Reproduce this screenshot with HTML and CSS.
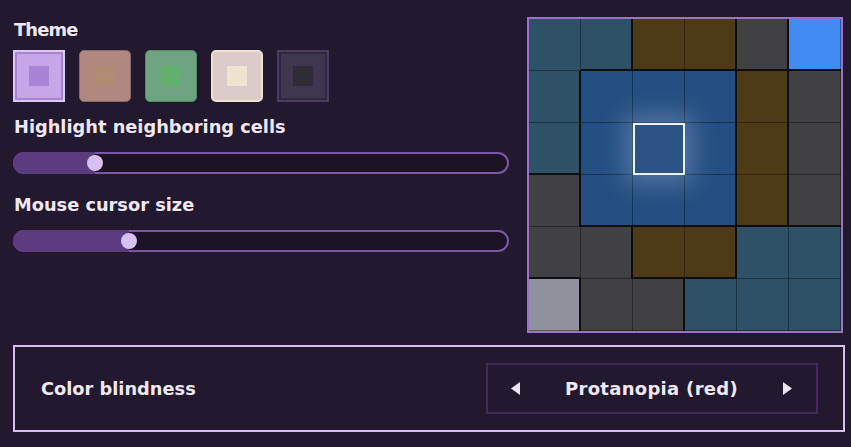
FILE: index.html
```html
<!DOCTYPE html>
<html lang="en">
<head>
<meta charset="utf-8">
<title>Settings</title>
<link rel="stylesheet" href="styles.css">
</head>
<body>
<div class="page">
  <div class="top">
    <div class="controls">
      <div class="label label-theme">Theme</div>
      <div class="swatches">
        <div class="sw sw-purple"><span class="sw-dot"></span></div>
        <div class="sw sw-rose"><span class="sw-dot"></span></div>
        <div class="sw sw-green"><span class="sw-dot"></span></div>
        <div class="sw sw-cream"><span class="sw-dot"></span></div>
        <div class="sw sw-dark"><span class="sw-dot"></span></div>
      </div>
      <div class="label">Highlight neighboring cells</div>
      <div class="slider">
        <div class="fill" style="width:82px"></div>
        <div class="knob" style="left:80px"></div>
      </div>
      <div class="label">Mouse cursor size</div>
      <div class="slider">
        <div class="fill" style="width:116px"></div>
        <div class="knob" style="left:114px"></div>
      </div>
    </div>
    <div class="board">
      <div class="c teal"></div><div class="c teal R B"></div><div class="c brown B"></div><div class="c brown R B"></div><div class="c gray R B"></div><div class="c bright B"></div>
      <div class="c teal R"></div><div class="c blue"></div><div class="c blue"></div><div class="c blue R"></div><div class="c brown R"></div><div class="c gray"></div>
      <div class="c teal R B"></div><div class="c blue"></div><div class="c sel"></div><div class="c blue R"></div><div class="c brown R"></div><div class="c gray"></div>
      <div class="c gray R"></div><div class="c blue B"></div><div class="c blue B"></div><div class="c blue R B"></div><div class="c brown R B"></div><div class="c gray B"></div>
      <div class="c gray B"></div><div class="c gray R"></div><div class="c brown B"></div><div class="c brown R B"></div><div class="c teal"></div><div class="c teal"></div>
      <div class="c light R"></div><div class="c gray"></div><div class="c gray R"></div><div class="c teal"></div><div class="c teal"></div><div class="c teal"></div>
    </div>
  </div>
  <div class="panel">
    <div class="panel-label">Color blindness</div>
    <div class="selector">
      <svg class="arrow" width="9" height="13" viewBox="0 0 9 13"><polygon points="9,0 9,13 0,6.5" /></svg>
      <span class="selector-value">Protanopia (red)</span>
      <svg class="arrow" width="9" height="13" viewBox="0 0 9 13"><polygon points="0,0 0,13 9,6.5" /></svg>
    </div>
  </div>
</div>
</body>
</html>
```
FILE: styles.css
```css
* { box-sizing: border-box; }
html, body { margin: 0; padding: 0; }
body {
  background: #22192e;
  color: #efe7f5;
  font-family: "DejaVu Sans", "Noto Sans", sans-serif;
  font-weight: 700;
  width: 851px;
  height: 447px;
  overflow: hidden;
}
.page {
  padding: 17px 0 0 13px;
}
.top {
  display: flex;
  gap: 18px;
}
.controls {
  width: 496px;
  display: flex;
  flex-direction: column;
}
.label {
  font-size: 17.8px;
  line-height: 26px;
  padding-left: 1px;
  margin-bottom: 12px;
}
.label-theme {
  margin-bottom: 7px;
  letter-spacing: -0.8px;
}
.swatches {
  display: flex;
  gap: 14px;
  margin-bottom: 12px;
}
.sw {
  width: 52px;
  height: 52px;
  display: flex;
  align-items: center;
  justify-content: center;
}
.sw-dot {
  width: 20px;
  height: 20px;
  display: block;
}
.sw-purple {
  background: #c6a6e6;
  border: 2px solid #dcc8f4;
  box-shadow: inset 0 0 0 2px #a982d6;
}
.sw-purple .sw-dot { background: #ab83d4; }
.sw-rose {
  background: #b0887f;
  border: 1px solid #8a6676;
  border-radius: 5px;
}
.sw-rose .sw-dot { background: #b28b74; }
.sw-green {
  background: #6fa482;
  border: 1px solid #4f8e62;
  border-radius: 5px;
}
.sw-green .sw-dot { background: #63b06e; }
.sw-cream {
  background: #dccbcb;
  border: 2px solid #efe2cf;
  border-radius: 5px;
}
.sw-cream .sw-dot { background: #f0e3cf; }
.sw-dark {
  background: #3f3650;
  border: 2px solid #4b3a6b;
  box-shadow: inset 0 0 0 2px #2d2a36;
}
.sw-dark .sw-dot { background: #2e2d36; }

.slider {
  position: relative;
  height: 22px;
  width: 496px;
  border: 2px solid #7b58a6;
  border-radius: 11px;
  background: #1b1226;
  margin-bottom: 18px;
}
.fill {
  position: absolute;
  left: -2px;
  top: -2px;
  bottom: -2px;
  background: #5c3b7f;
  border-radius: 11px 0 0 11px;
}
.knob {
  position: absolute;
  top: 50%;
  width: 16px;
  height: 16px;
  margin-top: -8px;
  margin-left: -8px;
  border-radius: 50%;
  background: #d7c0f1;
}

.board {
  width: 316px;
  height: 316px;
  border: 2px solid #9b72c4;
  display: grid;
  grid-template-columns: repeat(6, 52px);
  grid-template-rows: repeat(6, 52px);
  background: #22192e;
}
.c {
  --r: inset -1px 0 0 rgba(0, 0, 0, 0.38);
  --b: inset 0 -1px 0 rgba(0, 0, 0, 0.38);
  box-shadow: var(--r), var(--b);
}
.c.R { --r: inset -2px 0 0 #0e0e11; }
.c.B { --b: inset 0 -2px 0 #0e0e11; }
.teal { background: #2f5168; }
.brown { background: #4e3a17; }
.gray { background: #414045; }
.bright { background: #418cf2; }
.blue { background: #254f82; }
.light { background: #8f929c; }
.sel {
  background: #2d5385;
  position: relative;
  z-index: 1;
  box-shadow: inset 0 0 0 2px #eef2f8, 0 0 24px 9px rgba(170, 195, 230, 0.32);
}

.panel {
  margin-top: 12px;
  width: 832px;
  height: 87px;
  border: 2px solid #d5bff0;
  display: flex;
  align-items: center;
  justify-content: space-between;
  padding: 0 25px 0 26px;
}
.panel-label {
  font-size: 17.8px;
  line-height: 24px;
}
.selector {
  width: 332px;
  height: 51px;
  border: 2px solid #402a5e;
  display: flex;
  align-items: center;
  justify-content: space-between;
  padding: 0 24px 0 23px;
}
.selector-value {
  font-size: 18px;
  line-height: 24px;
  letter-spacing: 0.3px;
}
.arrow polygon { fill: #ece4f4; }
```
